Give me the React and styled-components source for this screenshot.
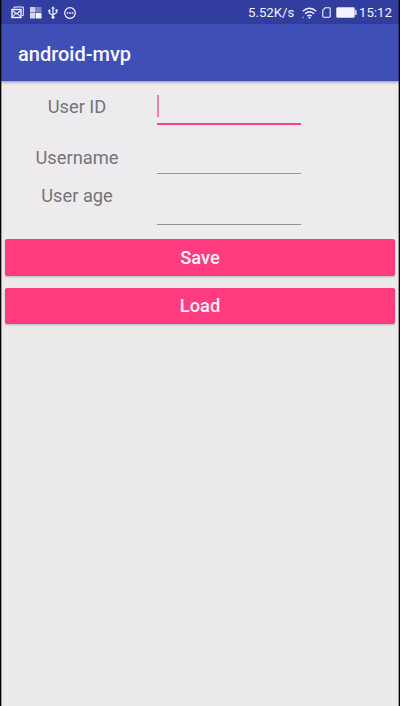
import React from "react";
import styled, { createGlobalStyle } from "styled-components";

const GlobalStyle = createGlobalStyle`
  * { box-sizing: border-box; }
  body { margin: 0; background: #ecebea; font-family: Roboto, sans-serif; }
`;

const Screen = styled.div`
  position: relative;
  display: flex;
  flex-direction: column;
  width: 400px;
  height: 706px;
  overflow: hidden;
  border-left: 1px solid #050506;
  border-right: 1px solid #050506;
  background: linear-gradient(#edebee 0, #edebee 225px, #ecebea 300px);

  /* soft inner edge of the device frame */
  &::after {
    content: "";
    position: absolute;
    inset: 0;
    border: solid rgba(0, 0, 0, 0.35);
    border-width: 0 1px;
    pointer-events: none;
  }
`;

const StatusBar = styled.header`
  display: flex;
  justify-content: space-between;
  flex: none;
  height: 24px;
  padding: 0 6px 0 10px;
  background: #313e9f;
  color: #f2f3fc;
`;

const StatusGroup = styled.div`
  display: flex;
  align-items: center;
  height: 25px;
  gap: ${(p) => p.$gap}px;

  svg { display: block; flex: none; }
`;

const StatusText = styled.span`
  width: ${(p) => p.$width}px;
  font-size: 13.2px;
  line-height: 26px;
  white-space: nowrap;
`;

const Clock = styled(StatusText)`
  margin-left: -3px;
`;

const AppBar = styled.div`
  display: flex;
  align-items: center;
  flex: none;
  height: 57px;
  padding: 2px 16px 0 17px;
  background: #404fb5;
  box-shadow: 0 1px 3px rgba(50, 60, 75, 0.55);
`;

const Title = styled.h1`
  margin: 0;
  color: #f7f7fd;
  font-size: 20px;
  line-height: 24px;
  font-weight: 500;
`;

const Form = styled.main`
  display: flex;
  flex-direction: column;
  flex: 1;
`;

const FieldRow = styled.div`
  display: grid;
  grid-template-columns: 152px 151px;
  height: ${(p) => p.$height}px;
`;

const Label = styled.label`
  padding-top: ${(p) => p.$top}px;
  color: #757478;
  font-size: 18.3px;
  line-height: 22px;
  text-align: center;
`;

const Field = styled.div`
  display: flex;
  margin: 0 3px 0 4px;
  padding-top: 14px;
  border-bottom: ${(p) => (p.$active ? "2px solid #fb4288" : "1px solid #929198")};
`;

const Caret = styled.span`
  width: 2px;
  height: 22px;
  background: #f080a7;
`;

const Actions = styled.div`
  display: flex;
  flex-direction: column;
  gap: 12px;
  padding: 14px 4px 0;
`;

const Button = styled.button`
  height: 36.5px;
  padding: 1px 0 0;
  border: 0;
  border-radius: 2px;
  background: #ff3c80;
  color: #fff0f6;
  font: 500 18.3px/22px Roboto, sans-serif;
  box-shadow: 0 1px 2px rgba(70, 100, 110, 0.4);
`;

const MailIcon = () => (
  <svg width="13" height="13" viewBox="0 0 13 13" fill="none" stroke="currentColor">
    <path d="M3 2.5V1h9.3v8.5H11" />
    <rect x="1" y="3.5" width="9" height="8" strokeWidth="1.4" />
    <path d="m1.5 4.5 4 3.5 4-3.5M1.5 11l3-3.5M9.5 11l-3-3.5" strokeWidth="1.1" />
  </svg>
);

const TilesIcon = () => (
  <svg width="12" height="12" viewBox="0 0 12 12" fill="currentColor">
    <rect width="5.5" height="5.5" opacity=".8" />
    <rect x="6" width="5.5" height="5.5" opacity=".38" />
    <rect y="6" width="5.5" height="5.5" opacity=".85" />
    <rect x="6" y="6" width="5.5" height="5.5" />
  </svg>
);

const UsbIcon = () => (
  <svg width="10" height="13" viewBox="0 0 10 13" fill="none" stroke="currentColor">
    <path d="M5 2v9M1.3 5v2L5 9.5M8.7 4v2.5L5 9" strokeWidth="1.2" />
    <path d="m5 0 1.7 2.7H3.3z" fill="currentColor" stroke="none" />
    <circle cx="5" cy="11.3" r="1.5" fill="currentColor" stroke="none" />
    <circle cx="1.4" cy="4.7" r="1.2" fill="currentColor" stroke="none" />
    <path d="M7.5 3.3h2v2h-2z" fill="currentColor" stroke="none" />
  </svg>
);

const MoreIcon = () => (
  <svg width="12" height="12" viewBox="0 0 12 12" fill="none" stroke="currentColor">
    <circle cx="6" cy="6" r="5.3" strokeWidth="1.2" />
    <path d="M2.8 6h1.6M5.2 6h1.6M7.6 6h1.6" strokeWidth="1.3" />
  </svg>
);

const WifiIcon = () => (
  <svg width="15" height="12" viewBox="0 0 15 12" fill="none" stroke="currentColor" strokeWidth="1.4">
    <path d="M.8 4.2Q7.5-1.7 14.2 4.2M3 6.8q4.5-3.9 9 0M5.2 9q2.3-1.8 4.6 0" />
    <circle cx="7.5" cy="10.6" r="1.1" fill="currentColor" stroke="none" />
    <path d="M.5 10.5h1.3" opacity=".6" />
  </svg>
);

const SimIcon = () => (
  <svg width="9" height="11" viewBox="0 0 9 11" fill="none" stroke="currentColor" strokeWidth="1.1">
    <path d="M3.2.8h4.1q.9 0 .9.9v7.6q0 .9-.9.9H1.7q-.9 0-.9-.9V3.2z" />
  </svg>
);

const BatteryIcon = () => (
  <svg width="21" height="11" viewBox="0 0 21 11" fill="currentColor">
    <rect x=".5" y=".5" width="18" height="10" rx="1" fill="none" stroke="currentColor" opacity=".75" />
    <rect x="1" y="1" width="17" height="9" />
    <rect x="19" y="3" width="1.7" height="5" rx=".5" opacity=".8" />
  </svg>
);

export default function App() {
  return (
    <>
      <GlobalStyle />
      <Screen>
        <StatusBar>
          <StatusGroup $gap={6}>
            <MailIcon />
            <TilesIcon />
            <UsbIcon />
            <MoreIcon />
          </StatusGroup>
          <StatusGroup $gap={5}>
            <StatusText $width={49}>5.52K/s</StatusText>
            <WifiIcon />
            <SimIcon />
            <BatteryIcon />
            <Clock $width={34}>15:12</Clock>
          </StatusGroup>
        </StatusBar>
        <AppBar>
          <Title>android-mvp</Title>
        </AppBar>
        <Form>
          <FieldRow $height={44}>
            <Label $top={15}>User ID</Label>
            <Field $active><Caret /></Field>
          </FieldRow>
          <FieldRow $height={49}>
            <Label $top={22}>Username</Label>
            <Field />
          </FieldRow>
          <FieldRow $height={51}>
            <Label $top={11}>User age</Label>
            <Field />
          </FieldRow>
          <Actions>
            <Button>Save</Button>
            <Button>Load</Button>
          </Actions>
        </Form>
      </Screen>
    </>
  );
}
